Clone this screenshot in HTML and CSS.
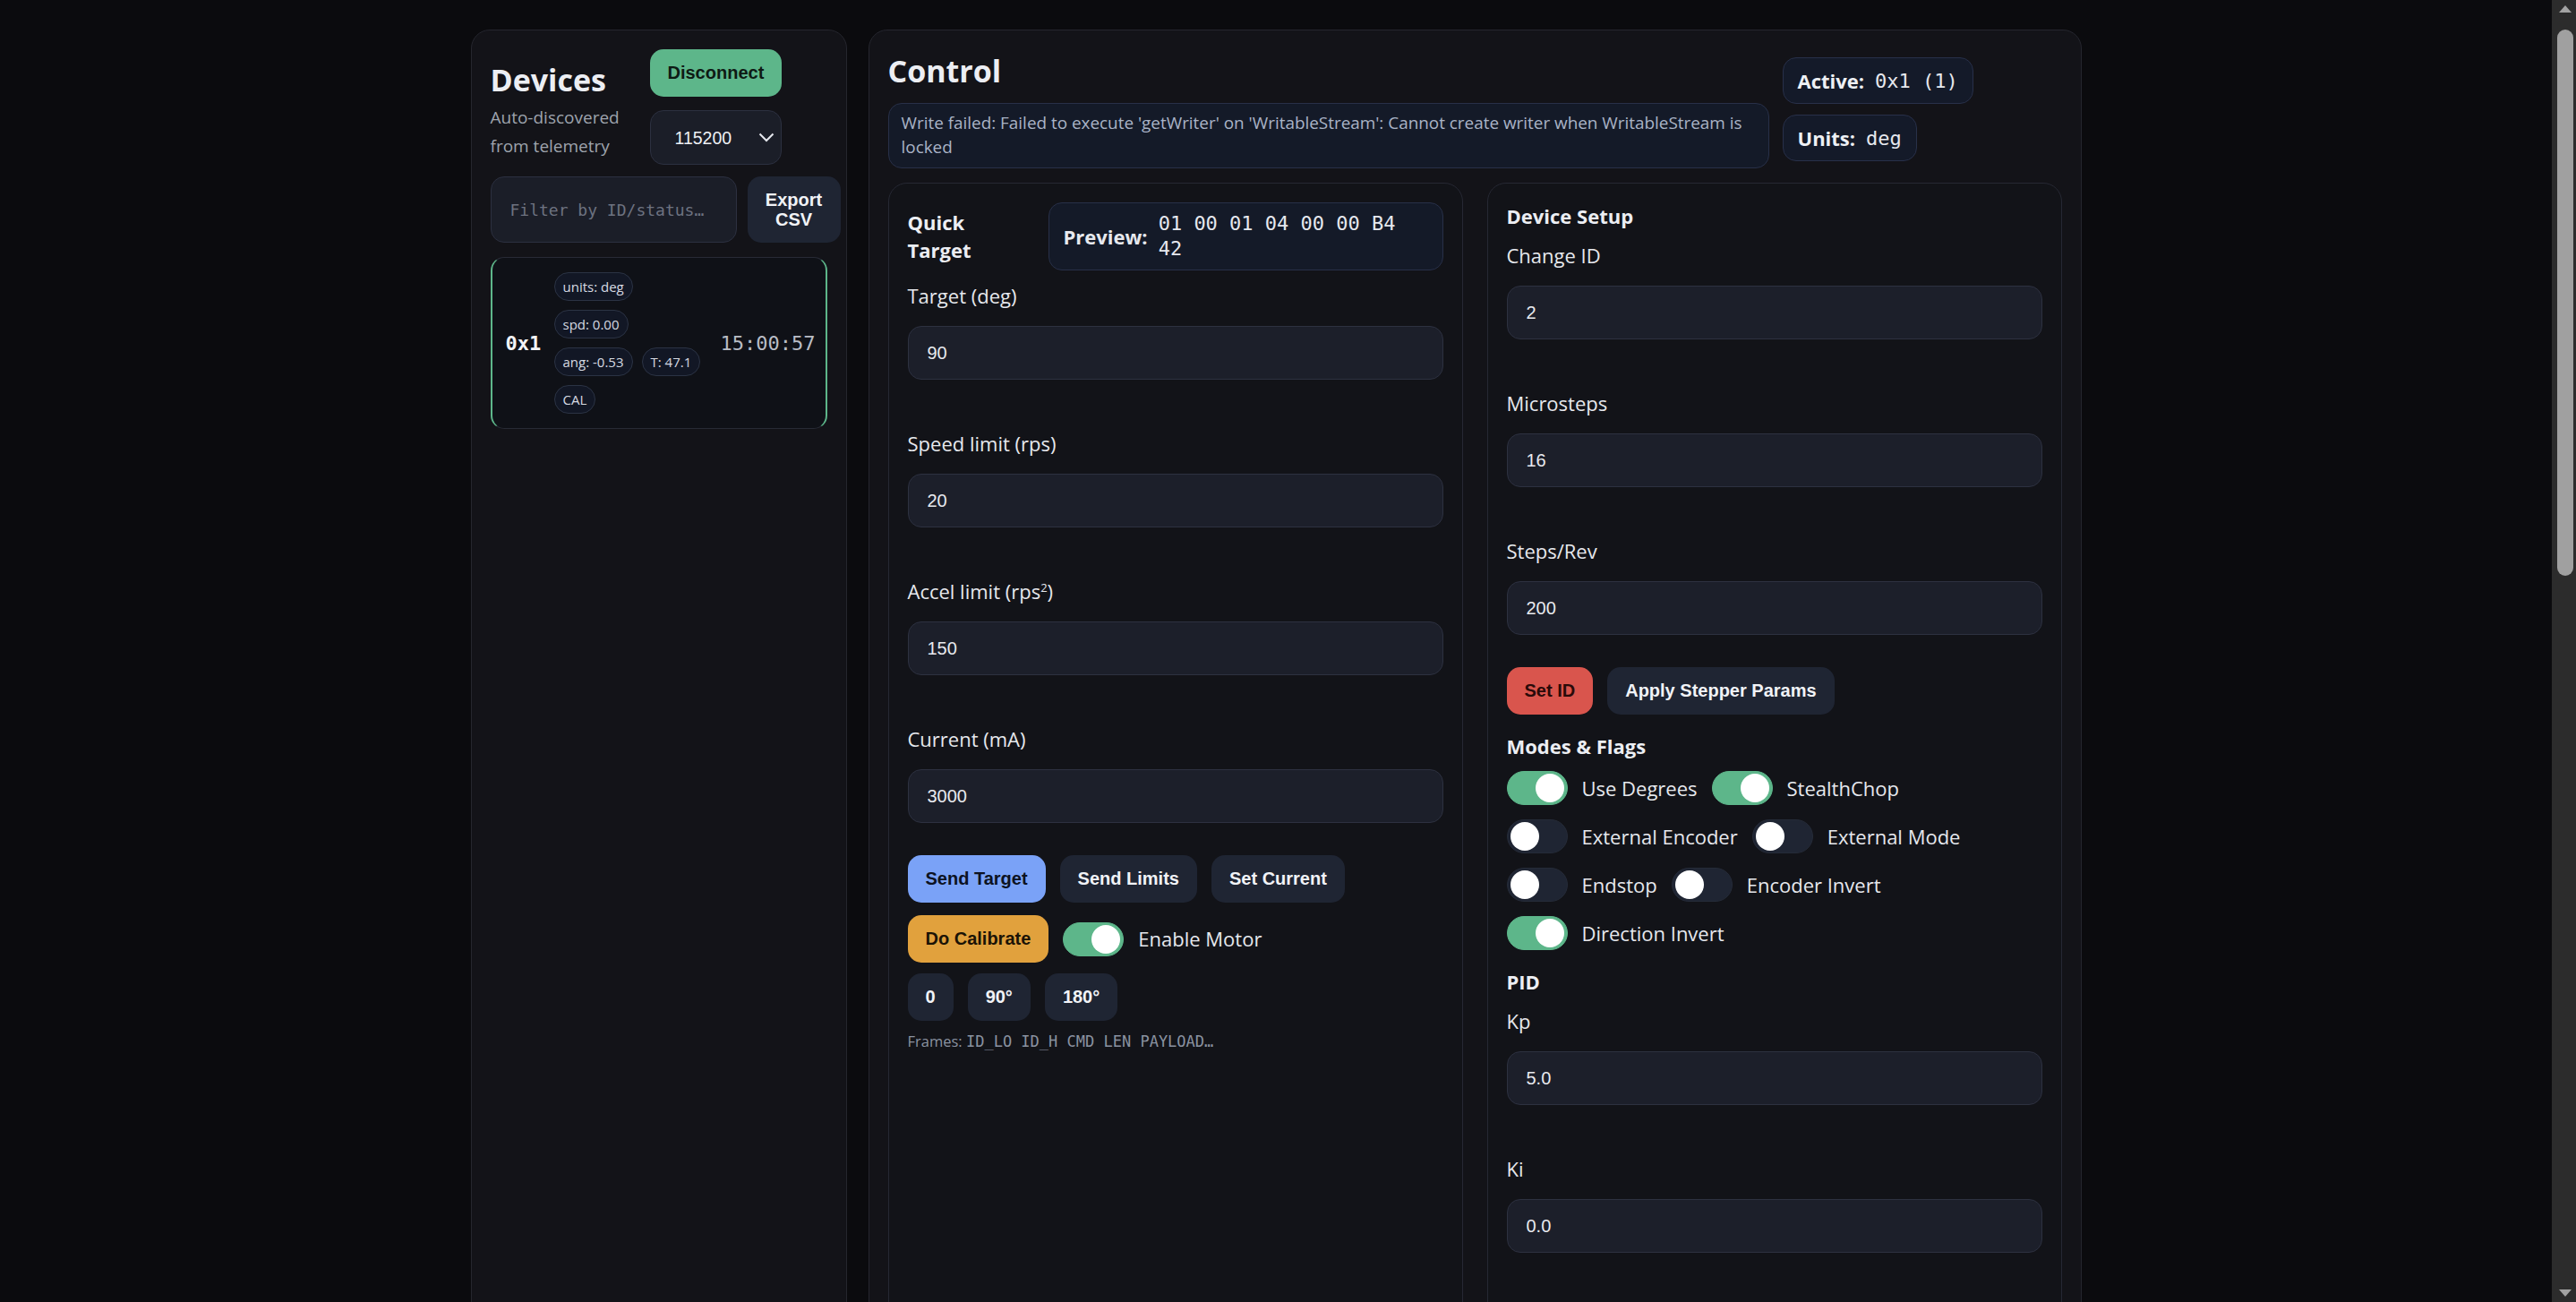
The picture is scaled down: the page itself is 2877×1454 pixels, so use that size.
FILE: index.html
```html
<!DOCTYPE html>
<html lang="en">
<head>
<meta charset="utf-8">
<title>Stepper Control</title>
<link rel="stylesheet" href="styles.css">
</head>
<body>
<div class="viewport">
  <div class="page">
    <main class="layout">
      <aside class="panel devices">
        <div class="dev-header">
          <div class="dev-title-block">
            <h2 class="panel-title">Devices</h2>
            <p class="muted">Auto-discovered from telemetry</p>
          </div>
          <div class="dev-actions">
            <button class="btn btn-green">Disconnect</button>
            <div class="select-wrap">
              <select class="baud"><option>115200</option></select>
              <svg class="chev" width="18" height="11" viewBox="0 0 18 11"><path d="M1.5 1.5 L9 9 L16.5 1.5" fill="none" stroke="#e6e8ee" stroke-width="2"/></svg>
            </div>
          </div>
        </div>
        <div class="filter-row">
          <input class="filter" type="text" placeholder="Filter by ID/status…">
          <button class="btn btn-dark export">Export CSV</button>
        </div>
        <div class="dev-card">
          <div class="dev-id">0x1</div>
          <div class="chips">
            <span class="chip">units: deg</span>
            <span class="chip">spd: 0.00</span>
            <span class="chip">ang: -0.53</span>
            <span class="chip">T: 47.1</span>
            <span class="chip">CAL</span>
          </div>
          <div class="dev-time">15:00:57</div>
        </div>
      </aside>

      <section class="panel control">
        <div class="ctl-header">
          <div class="ctl-left">
            <h2 class="panel-title">Control</h2>
            <div class="error-box">Write failed: Failed to execute 'getWriter' on 'WritableStream': Cannot create writer when WritableStream is locked</div>
          </div>
          <div class="ctl-badges">
            <div class="badge"><b>Active:</b><code>0x1 (1)</code></div>
            <div class="badge"><b>Units:</b><code>deg</code></div>
          </div>
        </div>

        <div class="cards">
          <div class="card">
            <div class="qt-head">
              <h3 class="card-title qt-title">Quick Target</h3>
              <div class="preview"><b>Preview:</b><code>01 00 01 04 00 00 B4 42</code></div>
            </div>
            <div class="fields">
              <div class="field"><label>Target (deg)</label><input class="input" value="90"></div>
              <div class="field"><label>Speed limit (rps)</label><input class="input" value="20"></div>
              <div class="field"><label>Accel limit (rps<sup>2</sup>)</label><input class="input" value="150"></div>
              <div class="field"><label>Current (mA)</label><input class="input" value="3000"></div>
            </div>
            <div class="btn-row row1">
              <button class="btn btn-blue">Send Target</button>
              <button class="btn btn-dark">Send Limits</button>
              <button class="btn btn-dark">Set Current</button>
            </div>
            <div class="btn-row row2">
              <button class="btn btn-orange">Do Calibrate</button>
              <div class="toggle-item">
                <span class="toggle on"><span class="knob"></span></span>
                <span class="toggle-label">Enable Motor</span>
              </div>
            </div>
            <div class="btn-row row3">
              <button class="btn btn-dark">0</button>
              <button class="btn btn-dark">90°</button>
              <button class="btn btn-dark">180°</button>
            </div>
            <div class="frames">Frames: <code>ID_LO ID_H CMD LEN PAYLOAD…</code></div>
          </div>

          <div class="card">
            <h3 class="card-title">Device Setup</h3>
            <div class="fields tight">
              <div class="field"><label>Change ID</label><input class="input" value="2"></div>
              <div class="field"><label>Microsteps</label><input class="input" value="16"></div>
              <div class="field"><label>Steps/Rev</label><input class="input" value="200"></div>
            </div>
            <div class="btn-row row1">
              <button class="btn btn-red">Set ID</button>
              <button class="btn btn-dark">Apply Stepper Params</button>
            </div>
            <h3 class="card-title section">Modes &amp; Flags</h3>
            <div class="toggles">
              <div class="toggle-row">
                <div class="toggle-item"><span class="toggle on"><span class="knob"></span></span><span class="toggle-label">Use Degrees</span></div>
                <div class="toggle-item"><span class="toggle on"><span class="knob"></span></span><span class="toggle-label">StealthChop</span></div>
              </div>
              <div class="toggle-row">
                <div class="toggle-item"><span class="toggle"><span class="knob"></span></span><span class="toggle-label">External Encoder</span></div>
                <div class="toggle-item"><span class="toggle"><span class="knob"></span></span><span class="toggle-label">External Mode</span></div>
              </div>
              <div class="toggle-row">
                <div class="toggle-item"><span class="toggle"><span class="knob"></span></span><span class="toggle-label">Endstop</span></div>
                <div class="toggle-item"><span class="toggle"><span class="knob"></span></span><span class="toggle-label">Encoder Invert</span></div>
              </div>
              <div class="toggle-row">
                <div class="toggle-item"><span class="toggle on"><span class="knob"></span></span><span class="toggle-label">Direction Invert</span></div>
              </div>
            </div>
            <h3 class="card-title section">PID</h3>
            <div class="fields tight">
              <div class="field"><label>Kp</label><input class="input" value="5.0"></div>
              <div class="field"><label>Ki</label><input class="input" value="0.0"></div>
              <div class="field"><label>Kd</label><input class="input" value="0.0"></div>
            </div>
            <div class="btn-row row1">
              <button class="btn btn-dark">Apply PID</button>
            </div>
          </div>
        </div>
      </section>
    </main>
  </div>
  <div class="scrollbar">
    <div class="sb-btn up"></div>
    <div class="sb-track"><div class="sb-thumb"></div></div>
    <div class="sb-btn down"></div>
  </div>
</div>
</body>
</html>
```

FILE: styles.css
```css
* { box-sizing: border-box; }
html, body { margin: 0; height: 100%; }
body {
  background: #0b0b0e;
  color: #e7e9ee;
  font-family: "Open Sans", "Noto Sans", sans-serif;
  overflow: hidden;
}
.viewport { display: flex; height: 100vh; }
.page { flex: 1; min-width: 0; overflow: hidden; }

.layout {
  display: grid;
  grid-template-columns: 420px 1355px;
  column-gap: 24px;
  justify-content: center;
  padding-top: 33px;
  align-items: stretch;
}
.panel {
  background: #131318;
  border: 1px solid #25262e;
  border-radius: 21px;
  padding: 21px;
}
.panel-title {
  margin: 0;
  font-size: 34px;
  line-height: 41px;
  font-weight: 700;
  color: #eceef3;
}
.muted { color: #9ea3ad; }

/* buttons */
.btn {
  font-family: "Liberation Sans", Arial, sans-serif;
  font-weight: 700;
  font-size: 20px;
  line-height: 23px;
  padding: 15px 20px;
  border: 0;
  border-radius: 15px;
  color: #f1f3f7;
  background: #1f2533;
  white-space: nowrap;
}
.btn-green { background: #5db68a; color: #0e1a14; }
.btn-blue { background: #7aa2f7; color: #0c1222; }
.btn-orange { background: #e1a13d; color: #1b1306; }
.btn-red { background: #d9554d; color: #2a0a09; }
.btn-dark { background: #1f2533; color: #f1f3f7; }

/* devices panel */
.dev-header { display: flex; gap: 18px; align-items: flex-start; }
.dev-title-block { width: 160px; padding-top: 14px; }
.dev-title-block .muted { margin: 5px 0 0; font-size: 19px; line-height: 32px; }
.dev-actions { display: flex; flex-direction: column; gap: 15px; align-items: flex-start; }
.select-wrap { position: relative; width: 147px; height: 61px; }
.baud {
  appearance: none;
  -webkit-appearance: none;
  width: 100%; height: 100%;
  background: #1b1e28;
  border: 1px solid #2c3040;
  border-radius: 15px;
  color: #eef0f4;
  font: 19.5px "Liberation Sans", Arial, sans-serif;
  padding: 0 0 0 27px;
}
.chev { position: absolute; right: 8px; top: 25px; pointer-events: none; }

.filter-row { display: flex; gap: 12px; margin-top: 13px; }
.filter {
  flex: none;
  width: 275px;
  background: #1b1e28;
  border: 1px solid #2c3040;
  border-radius: 15px;
  padding: 0 21px;
  font: 18px "DejaVu Sans Mono", "Liberation Mono", monospace;
  color: #e7e9ee;
}
.filter::placeholder { color: #6d7280; }
.export { flex: none; width: 104px; white-space: normal; line-height: 22px; padding: 15px 10px; text-align: center; }

.dev-card {
  margin-top: 16px;
  display: grid;
  grid-template-columns: 44px 176px 1fr;
  column-gap: 10px;
  align-items: center;
  padding: 16px 15px;
  background: #0f1117;
  border: 1px solid #272a35;
  border-left: 2px solid #5db68a;
  border-right: 2px solid #5db68a;
  border-radius: 15px;
}
.dev-id {
  font: 700 22px "DejaVu Sans Mono", "Liberation Mono", monospace;
  color: #f2f3f6;
}
.chips { display: flex; flex-wrap: wrap; gap: 10px; }
.chip {
  display: inline-block;
  height: 32px;
  line-height: 30px;
  padding: 0 9px;
  border: 1px solid #2b3344;
  border-radius: 16px;
  background: #121725;
  font-size: 15px;
  color: #d6dae2;
  white-space: nowrap;
}
.dev-time {
  text-align: right;
  font: 22px "DejaVu Sans Mono", "Liberation Mono", monospace;
  color: #b9bdc6;
}

/* control panel */
.ctl-header { display: grid; grid-template-columns: 984px auto; column-gap: 15px; align-items: start; }
.ctl-left { padding-top: 4px; }
.error-box {
  margin-top: 15px;
  background: #141a28;
  border: 1px solid #283048;
  border-radius: 15px;
  padding: 8px 14px 9px;
  font-size: 18.9px;
  line-height: 27px;
  color: #a9b3c6;
}
.ctl-badges { display: flex; flex-direction: column; align-items: flex-start; gap: 12px; padding-top: 9px; }
.badge {
  display: flex;
  align-items: center;
  gap: 12px;
  height: 52px;
  padding: 0 16px;
  background: #141a29;
  border: 1px solid #283049;
  border-radius: 15px;
  font-size: 22px;
}
.badge b { font-weight: 700; color: #eef0f4; }
.badge code { font: 22px "DejaVu Sans Mono", "Liberation Mono", monospace; color: #e6e8ee; }

.cards {
  display: grid;
  grid-template-columns: 1fr 1fr;
  column-gap: 27px;
  margin-top: 16px;
}
.card {
  border: 1px solid #262833;
  border-radius: 21px;
  padding: 21px;
  background: #121318;
  padding-bottom: 160px;
}
.card-title {
  margin: 0;
  font-size: 22px;
  line-height: 31px;
  font-weight: 700;
  color: #eceef3;
}
.card-title.section { margin-top: 20px; }
.qt-title { width: min-content; }

.qt-head { display: grid; grid-template-columns: 145px 1fr; column-gap: 12px; align-items: center; }
.preview {
  display: flex;
  align-items: center;
  gap: 12px;
  min-height: 76px;
  padding: 9px 24px 9px 16px;
  background: #141a28;
  border: 1px solid #283048;
  border-radius: 15px;
}
.preview b { font-size: 22px; font-weight: 700; flex: none; }
.preview code { font: 22px/28px "DejaVu Sans Mono", "Liberation Mono", monospace; color: #e6e8ee; }

.fields { margin-top: 12px; }
.field label {
  display: block;
  font-size: 22px;
  line-height: 33px;
  margin-bottom: 17px;
  color: #e6e8ed;
}
.field label sup { font-size: 13px; line-height: 0; }
.field + .field { margin-top: 55px; }
.input {
  display: block;
  width: 100%;
  height: 60px;
  background: #1c1f2a;
  border: 1px solid #2d3140;
  border-radius: 15px;
  padding: 0 21px;
  color: #e8eaef;
  font: 20px "Liberation Sans", Arial, sans-serif;
}

.btn-row { display: flex; align-items: center; gap: 16px; }
.btn-row.row1 { margin-top: 36px; }
.btn-row.row2 { margin-top: 14px; }
.btn-row.row3 { margin-top: 12px; }

.toggle-item { display: flex; align-items: center; gap: 16px; }
.toggle {
  display: flex;
  align-items: center;
  justify-content: flex-start;
  width: 68px;
  height: 38px;
  padding: 3px;
  border-radius: 19px;
  background: #1f2533;
  border: 1px solid #252b38;
}
.toggle.on { justify-content: flex-end; background: #5db68a; border-color: #5db68a; }
.knob { width: 32px; height: 32px; border-radius: 50%; background: #ffffff; }
.toggle-label { font-size: 22px; line-height: 33px; color: #e6e8ed; }

.frames {
  margin-top: 11px;
  font-size: 16.5px;
  line-height: 24px;
  color: #8a92a0;
}
.frames code { font: 17px "DejaVu Sans Mono", "Liberation Mono", monospace; }

.toggles { margin-top: 12px; display: flex; flex-direction: column; gap: 16px; }
.toggle-row { display: flex; align-items: center; gap: 16px; }

/* fake scrollbar */
.scrollbar {
  flex: none;
  width: 27px;
  height: 100vh;
  background: #2c2c2c;
  display: flex;
  flex-direction: column;
}
.sb-btn { flex: none; height: 27px; position: relative; }
.sb-btn.up::before {
  content: "";
  position: absolute;
  left: 8px; top: 6px;
  border-left: 7px solid transparent;
  border-right: 7px solid transparent;
  border-bottom: 8px solid #a3a3a3;
}
.sb-btn.down::before {
  content: "";
  position: absolute;
  left: 8px; bottom: 6px;
  border-left: 7px solid transparent;
  border-right: 7px solid transparent;
  border-top: 8px solid #a3a3a3;
}
.sb-track { flex: 1; padding: 6px 3px 0 6px; }
.sb-thumb { width: 18px; height: 610px; border-radius: 9px; background: #a0a0a0; }
```
